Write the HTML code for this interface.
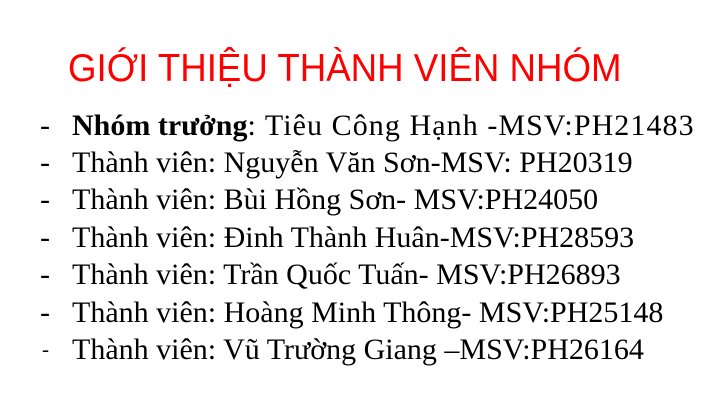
<!DOCTYPE html>
<html><head><meta charset="utf-8"><style>
html,body{margin:0;padding:0;background:#fff;width:720px;height:418px;overflow:hidden;position:relative}
.t{position:absolute;left:68px;top:47px;font-family:"Liberation Sans",sans-serif;font-size:39px;line-height:44px;color:#ff0000;white-space:nowrap;transform:scaleX(0.94);transform-origin:0 0}
.l{position:absolute;left:72px;font-family:"Liberation Serif",serif;font-size:30px;line-height:37px;color:#000;white-space:nowrap}
.d{position:absolute;left:40px;font-family:"Liberation Serif",serif;font-size:30px;line-height:37px;color:#000}
</style></head><body>
<div class="t">GIỚI THIỆU THÀNH VIÊN NHÓM</div>
<div class="d" style="top:107px">-</div><div class="l" style="top:107px"><b>Nhóm trưởng</b><span style="letter-spacing:1.07px">: Tiêu Công Hạnh -MSV:PH21483</span></div>
<div class="d" style="top:144px">-</div><div class="l" style="top:144px">Thành viên: Nguyễn Văn Sơn-MSV: PH20319</div>
<div class="d" style="top:181px">-</div><div class="l" style="top:181px">Thành viên: Bùi Hồng Sơn- MSV:PH24050</div>
<div class="d" style="top:219px">-</div><div class="l" style="top:219px">Thành viên: Đinh Thành Huân-MSV:PH28593</div>
<div class="d" style="top:256px">-</div><div class="l" style="top:256px">Thành viên: Trần Quốc Tuấn- MSV:PH26893</div>
<div class="d" style="top:294px">-</div><div class="l" style="top:294px">Thành viên: Hoàng Minh Thông- MSV:PH25148</div>
<div class="d" style="top:331px;font-size:21px;left:42px">-</div><div class="l" style="top:331px">Thành viên: Vũ Trường Giang –MSV:PH26164</div>
</body></html>
